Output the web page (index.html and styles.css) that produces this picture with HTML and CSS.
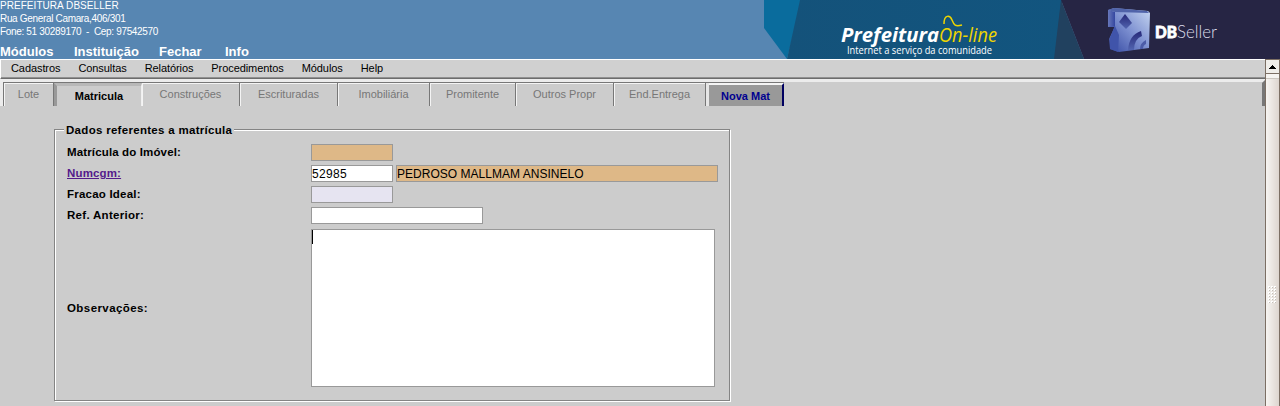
FILE: index.html
```html
<!DOCTYPE html>
<html lang="pt-BR">
<head>
<meta charset="utf-8">
<title>Prefeitura On-line</title>
<link rel="stylesheet" href="styles.css">
</head>
<body>
<header class="header">
  <div class="org">
    <div class="org-name">PREFEITURA DBSELLER</div>
    <div class="org-address">Rua General Camara,406/301</div>
    <div class="org-phone">Fone: 51 30289170&nbsp; -&nbsp; Cep: 97542570</div>
    <nav class="main-nav"><a class="nav-modules">Módulos</a><a class="nav-inst">Instituição</a><a class="nav-close">Fechar</a><a>Info</a></nav>
  </div>
  <svg class="banner" width="516" height="59" viewBox="0 0 516 59">
    <defs>
      <linearGradient id="teal" x1="0" x2="1"><stop offset="0" stop-color="#14527a"/><stop offset="1" stop-color="#12557f"/></linearGradient>
      <linearGradient id="face" x1="0" y1="1" x2="1" y2="0"><stop offset="0" stop-color="#3246a0"/><stop offset=".5" stop-color="#7c8fd0"/><stop offset="1" stop-color="#c8d8f2"/></linearGradient>
      <linearGradient id="side" x1="0" x2="1"><stop offset="0" stop-color="#6878ba"/><stop offset="1" stop-color="#3446a0"/></linearGradient>
      <linearGradient id="cut" x1="0" y1="0" x2="0" y2="1"><stop offset="0" stop-color="#262878"/><stop offset="1" stop-color="#5265b0"/></linearGradient>
    </defs>
    <path d="M0 0H38L23 59L0 28Z" fill="#0a6c9d"/>
    <path d="M36 0H298V59H23Z" fill="url(#teal)"/>
    <path d="M297 0L320 59H290Z" fill="#21415f"/>
    <path d="M297 0H516V59H320Z" fill="#262544"/>
    <text class="logo-bold" x="77" y="42" textLength="98" lengthAdjust="spacingAndGlyphs">Prefeitura</text>
    <text class="logo-light" x="175" y="42" textLength="58" lengthAdjust="spacingAndGlyphs">On-line</text>
    <path d="M180 24C180 14 186 15 188 20C190 25 191 27 198 25" fill="none" stroke="#efd500" stroke-width="1.5"/>
    <text class="slogan" x="83" y="53.5" textLength="145" lengthAdjust="spacingAndGlyphs">Internet a serviço da comunidade</text>
    <path d="M344 10L350 8L384 11L386 13L385 48L355 52L346 49L345 38L351 27H344Z" fill="url(#face)"/>
    <path d="M344 10L351 12V26L344 27Z" fill="url(#side)"/>
    <path d="M344 27L351 26L355 35L354 52L346 49V38L350 27Z" fill="#4054aa"/>
    <path d="M344 27H350L345 39Z" fill="#262544"/>
    <path d="M351 12L385 13L383 11L350 8L344 10Z" fill="#5063a9"/>
    <path d="M361 14L368 23L362 29L355 22Z" fill="url(#cut)"/>
    <path d="M364 50Q365 35 377 31L378 36Q370 39 370 50Z" fill="url(#cut)"/>
    <path d="M376 49Q376 43 382 40V44Q379 45 379 49Z" fill="#4c5ca8"/>
    <text class="seller-bold" x="391" y="38" textLength="22" lengthAdjust="spacingAndGlyphs">DB</text>
    <text class="seller-light" x="413" y="38" textLength="40" lengthAdjust="spacingAndGlyphs">Seller</text>
  </svg>
</header>
<div class="workspace">
  <div class="content">
    <nav class="menu"><a>Cadastros</a><a>Consultas</a><a>Relatórios</a><a>Procedimentos</a><a>Módulos</a><a>Help</a></nav>
    <div class="tab-strip">
      <div class="tabs">
        <div class="tab tab-lote">Lote</div>
        <div class="tab active">Matricula</div>
        <div class="tab tab-98">Construções</div>
        <div class="tab tab-98">Escrituradas</div>
        <div class="tab tab-92">Imobiliária</div>
        <div class="tab tab-86">Promitente</div>
        <div class="tab tab-98">Outros Propr</div>
        <div class="tab tab-92">End.Entrega</div>
        <div class="tab-divider"></div>
        <div class="tab-new">Nova Mat</div>
      </div>
      <svg class="strip-end" width="3" height="26" viewBox="0 0 3 26"><path d="M3 0V26H0V3Z" fill="#777"/></svg>
    </div>
    <main class="page">
      <fieldset class="panel">
        <legend>Dados referentes a matrícula</legend>
        <div class="row"><label class="label-mat">Matrícula do Imóvel:</label><div class="field short locked"></div></div>
        <div class="row"><label class="link"><a href="#">Numcgm:</a></label><div class="field short number">52985</div><div class="field name locked">PEDROSO MALLMAM ANSINELO</div></div>
        <div class="row"><label class="label-ideal">Fracao Ideal:</label><div class="field short pale"></div></div>
        <div class="row"><label>Ref. Anterior:</label><div class="field medium"></div></div>
        <div class="row notes-row"><label class="label-notes">Observações:</label><div class="notes"><div class="caret"></div></div></div>
      </fieldset>
    </main>
  </div>
  <div class="scrollbar">
    <div class="scroll-up"><svg width="7" height="4" viewBox="0 0 7 4" shape-rendering="crispEdges"><path d="M3 0H4V1H5V2H6V3H7V4H0V3H1V2H2V1H3Z"/></svg></div>
    <div class="scroll-gap"></div>
    <div class="scroll-thumb">
      <svg width="9" height="18" viewBox="0 0 9 18" shape-rendering="crispEdges">
        <defs><pattern id="grip" width="3" height="3" patternUnits="userSpaceOnUse"><path d="M0 0H2V2H0Z" fill="#fff"/><path d="M1 1H2V2H1Z" fill="#c4bfb8"/></pattern></defs>
        <path d="M0 0H9V18H0Z" fill="url(#grip)"/>
      </svg>
    </div>
  </div>
</div>
</body>
</html>
```
FILE: styles.css
```css
* { box-sizing: border-box; }
body { margin: 0; height: 406px; overflow: hidden; background: #ccc; font: 11px/13px "Liberation Sans", Arial, sans-serif; color: #000; white-space: nowrap; }
.header { height: 59px; background: #5786b2; display: flex; justify-content: space-between; color: #fff; }
.org { font-size: 10px; line-height: 13px; }
.org-name { height: 12px; line-height: 12px; letter-spacing: .05px; }
.org-address { letter-spacing: -.33px; }
.org-phone { letter-spacing: -.33px; }
.main-nav { display: flex; font-size: 13px; font-weight: bold; line-height: 15px; padding-top: 6px; }
.nav-modules { width: 74px; }
.nav-inst { width: 85px; }
.nav-close { width: 66px; }
.banner { display: block; }
.logo-bold { font: italic bold 20px "Open Sans", sans-serif; fill: #fff; }
.logo-light { font: italic 20px "Open Sans", sans-serif; fill: #efd500; }
.slogan { font: 10px "Open Sans", sans-serif; fill: #fff; }
.seller-bold { font: 900 17px Lato, sans-serif; fill: #fff; stroke: #fff; stroke-width: .8px; }
.seller-light { font: 300 18px Lato, sans-serif; fill: #dcdcea; }
.workspace { display: flex; height: 347px; }
.content { width: 1265px; }
.menu { height: 20px; background: #d0d0d0; border-top: 1px solid #fff; border-left: 1px solid #fff; border-bottom: 1px solid #6c6c6c; box-shadow: inset 0 -1px #909090; padding-left: 10px; display: flex; gap: 18px; line-height: 17px; letter-spacing: -.08px; }
.tab-strip { height: 27px; border-left: 3px solid #ececec; border-top: 3px solid #ececec; display: flex; justify-content: space-between; }
.tabs { display: flex; border-left: 1px solid #777; border-top: 1px solid #777; height: 24px; }
.tab { border-right: 1px solid #777; box-shadow: inset 1px 1px #f4f4f4; text-align: center; color: #777; line-height: 22px; height: 23px; }
.tab-lote { width: 50px; }
.tab-98 { width: 98px; }
.tab-92 { width: 92px; }
.tab-86 { width: 86px; }
.tab.active { width: 88px; border-top: 3px solid #b8b8b8; border-left: 3px solid #999; border-right: 1px solid #f0f0f0; box-shadow: none; color: #000; font-weight: bold; line-height: 20px; }
.tab-divider { width: 3px; background: #e6e6e6; }
.tab-new { width: 75px; height: 23px; border-top: 2px solid #f4f4f4; border-right: 2px solid #000060; background: #999; color: #000090; font-weight: bold; text-align: center; line-height: 22px; }
.strip-end { margin-top: -2px; display: block; }
.page { padding: 18px 0 0 54px; }
.panel { width: 676px; height: 277px; margin: 0; padding: 9px 0 0 12px; border: 1px solid #848484; box-shadow: inset 1px 1px #fff, 1px 1px #fff; font-size: 11.5px; letter-spacing: .3px; }
.panel legend { padding: 0 2px; margin-left: -3px; height: 11px; line-height: 13px; font-weight: bold; background: #ccc; }
.row { display: flex; align-items: center; height: 17px; margin-bottom: 4px; }
.row label { width: 244px; font-weight: bold; }
.row .label-mat { letter-spacing: .14px; }
.row .link { letter-spacing: .15px; }
.row .label-ideal { letter-spacing: .22px; }
.row .label-notes { letter-spacing: .42px; }
.link a { color: #551a8b; }
.field { height: 17px; border: 1px solid #999; background: #fff; font-size: 12px; line-height: 17px; }
.short { width: 82px; }
.number { letter-spacing: .35px; }
.name { width: 322px; margin-left: 3px; letter-spacing: .02px; }
.medium { width: 172px; }
.locked { background: #deb887; }
.pale { background: #e6e4f1; }
.notes-row { height: 158px; margin-top: 5px; }
.notes { width: 404px; height: 158px; border: 1px solid #999; background: #fff; }
.caret { width: 1px; height: 14px; background: #000; }
.scrollbar { width: 15px; border: 1px solid #7c6f64; border-bottom: 0; background: #f6f4f1; display: flex; flex-direction: column; }
.scroll-up { height: 14px; background: #f0eeea; border-bottom: 1px solid #7c6f64; display: flex; align-items: center; justify-content: center; }
.scroll-gap { height: 5px; border-bottom: 1px solid #cbc6bf; }
.scroll-thumb { flex: 1; padding: 207px 0 0 2px; background: linear-gradient(90deg, #f7f5f2, #ddd5cf); }
```
